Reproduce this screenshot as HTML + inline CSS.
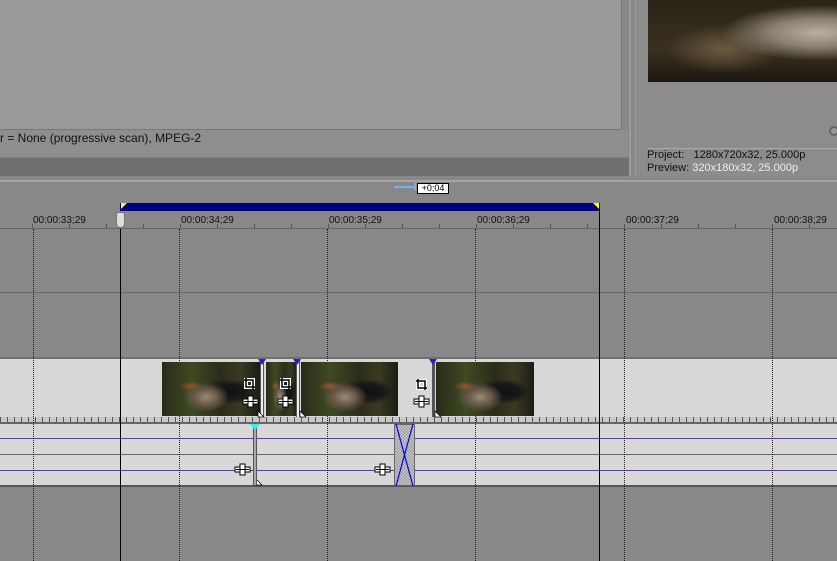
<!DOCTYPE html><html><head><style>
*{margin:0;padding:0;box-sizing:border-box}
body{width:837px;height:561px;overflow:hidden;background:#888;position:relative;font-family:"Liberation Sans",sans-serif;font-size:11px}
div{position:absolute}
.vd{width:0;border-left:1px dotted #222}
.th{top:362px;height:54px;background:radial-gradient(ellipse at 45% 65%,#9a8a7a 0,#6a5a4a 15%,transparent 30%),radial-gradient(ellipse at 30% 45%,#a05030 0,transparent 12%),radial-gradient(ellipse at 68% 55%,#111 0,#181818 18%,transparent 30%),linear-gradient(90deg,#2a2a18,#3d4a22 30%,#2c2c1a 60%,#3a3a22 80%,#1c1c14)}
.tc{font-size:10px;color:#111;top:215px}
svg{position:absolute}
</style></head><body>
<div style="left:0;top:0;width:622px;height:130px;background:#999;border-right:1px solid #777;border-bottom:1px solid #777"></div>
<div style="left:0;top:130px;width:628px;height:27px;background:#8e8e8e"></div>
<div style="left:0;top:131px;color:#111;font-size:12px">r = None (progressive scan), MPEG-2</div>
<div style="left:0;top:157px;width:629px;height:19px;background:#707070;border-top:1px solid #808080"></div>
<div style="left:629px;top:0;width:2px;height:177px;background:#9a9a9a"></div>
<div style="left:635px;top:0;width:202px;height:177px;background:#8c8c8c;border-left:1px solid #9a9a9a"></div>
<div style="left:648px;top:0;width:189px;height:82px;background:radial-gradient(ellipse at 90% 40%,#b8b0a0 0,#8a8070 20%,transparent 40%),radial-gradient(ellipse at 40% 60%,#6a5a40 0,transparent 35%),linear-gradient(#2a2418,#3a3020 60%,#1c1810)"></div>
<div style="left:648px;top:148px;width:189px;height:1px;background:#aaa"></div>
<div style="left:647px;top:149px;color:#111;font-size:11px;line-height:13px">Project:&nbsp;&nbsp; 1280x720x32, 25.000p<br>Preview: <span style="color:#eee">320x180x32, 25.000p</span></div>
<div style="left:829px;top:126px;width:10px;height:10px;border-radius:50%;border:2px solid #666;background:#999"></div>
<div style="left:0;top:180px;width:837px;height:2px;background:#a5a5a5"></div>
<div style="left:394px;top:186px;width:20px;height:2px;background:#7ab0f0"></div>
<div style="left:414px;top:183px;width:2px;height:7px;background:#7ab0f0"></div>
<div style="left:417px;top:183px;width:32px;height:11px;background:#fff;border:1px solid #000;font-size:9px;line-height:9px;text-align:center;color:#000">+0;04</div>
<div style="left:120px;top:203px;width:480px;height:8px;background:#000080"></div>
<div style="left:121px;top:203px;width:0;height:0;border-top:6px solid #ff0;border-right:6px solid transparent"></div>
<div style="left:593px;top:203px;width:0;height:0;border-top:6px solid #ff0;border-left:6px solid transparent"></div>
<div style="left:0;top:228px;width:837px;height:1px;background:#666"></div>
<div style="left:0;top:224px;width:837px;height:4px;background-image:repeating-linear-gradient(90deg,transparent 0 32px,#555 32px 33px,transparent 33px 69px,#555 69px 70px,transparent 70px 106px,#555 106px 107px,transparent 107px 143px,#555 143px 144px,transparent 144px 148px)"></div>
<div class="tc" style="left:33px">00:00:33;29</div>
<div class="tc" style="left:181px">00:00:34;29</div>
<div class="tc" style="left:329px">00:00:35;29</div>
<div class="tc" style="left:477px">00:00:36;29</div>
<div class="tc" style="left:626px">00:00:37;29</div>
<div class="tc" style="left:774px">00:00:38;29</div>
<div style="left:116px;top:212px;width:9px;height:16px;background:#ddd;border:1px solid #777;border-radius:2px 2px 4px 4px"></div>
<div style="left:0;top:292px;width:837px;height:1px;background:#6a6a6a"></div>
<div style="left:0;top:357px;width:837px;height:2px;background:#707070"></div>
<div style="left:0;top:359px;width:837px;height:58px;background:#d8d8d8"></div>
<div style="left:0;top:417px;width:837px;height:5px;background:#c8c8c8;background-image:repeating-linear-gradient(90deg,#555 0 1px,transparent 1px 7px)"></div>
<div style="left:0;top:422px;width:837px;height:2px;background:#666"></div>
<div style="left:0;top:424px;width:837px;height:61px;background:#d8d8d8"></div>
<div style="left:0;top:485px;width:837px;height:2px;background:#555"></div>
<div style="left:0;top:438px;width:837px;height:1px;background:#5a3f99"></div>
<div style="left:0;top:454px;width:837px;height:1px;background:#666"></div>
<div style="left:0;top:470px;width:837px;height:1px;background:#5a3f99"></div>
<div class="vd" style="left:33px;top:229px;height:332px"></div>
<div class="vd" style="left:179px;top:229px;height:332px"></div>
<div class="vd" style="left:327px;top:229px;height:332px"></div>
<div class="vd" style="left:475px;top:229px;height:332px"></div>
<div class="vd" style="left:624px;top:229px;height:332px"></div>
<div class="vd" style="left:772px;top:229px;height:332px"></div>
<div class="th" style="left:162px;width:98px"></div>
<div class="th" style="left:266px;width:31px"></div>
<div class="th" style="left:301px;width:97px"></div>
<div class="th" style="left:436px;width:98px"></div>
<div style="left:260px;top:360px;width:4px;height:57px;background:#eee;border-left:1px solid #555;border-right:1px solid #555"></div>
<div style="left:296px;top:360px;width:4px;height:57px;background:#eee;border-left:1px solid #555;border-right:1px solid #555"></div>
<div style="left:432px;top:360px;width:3px;height:57px;background:#555"></div>
<div style="left:258px;top:359px;border-top:6px solid #22c;border-left:4px solid transparent;border-right:4px solid transparent"></div>
<div style="left:293px;top:359px;border-top:6px solid #22c;border-left:4px solid transparent;border-right:4px solid transparent"></div>
<div style="left:429px;top:359px;border-top:6px solid #22c;border-left:4px solid transparent;border-right:4px solid transparent"></div>
<svg width="837" height="561" style="left:0;top:0">
<defs>
<g id="crop"><path d="M2 0 V9 H11 M0 2 H9 V11" stroke="#fff" stroke-width="4" fill="none"/><path d="M2 0 V9 H11 M0 2 H9 V11" stroke="#000" stroke-width="1.5" fill="none"/></g>
<g id="sl"><rect x="0" y="2" width="15" height="5" fill="#fff" stroke="#000" stroke-width="1"/><rect x="5" y="-1" width="5" height="11" fill="#fff" stroke="#000" stroke-width="1"/><path d="M1 4.5 H14" stroke="#000"/></g>
</defs>
<use href="#crop" x="244" y="378"/><use href="#crop" x="280" y="378"/><use href="#crop" x="416" y="379"/>
<use href="#sl" x="243" y="397"/><use href="#sl" x="278" y="397"/><use href="#sl" x="414" y="397"/>
<use href="#sl" x="235" y="465"/><use href="#sl" x="375" y="465"/>
<path d="M258 417 V411 L264 417Z M300 417 V411 L306 417Z M435 417 V411 L441 417Z M256 485 V479 L262 485Z M396 485 V479 L402 485Z" fill="#fff" stroke="#000" stroke-width="0.7"/>
</svg>
<div style="left:253px;top:425px;width:4px;height:60px;background:#aaa;border-left:1px solid #555;border-right:1px solid #555"></div>
<div style="left:250px;top:424px;border-top:6px solid #3ee;border-left:5px solid transparent;border-right:5px solid transparent"></div>
<div style="left:394px;top:424px;width:21px;height:62px;background:repeating-conic-gradient(#999 0 25%,#ccc 0 50%) 0 0/3px 3px;border:1px solid #666"></div>
<svg style="left:394px;top:424px" width="21" height="62"><path d="M2 0 L19 62 M19 0 L2 62" stroke="#00f" stroke-width="1.2" fill="none"/></svg>
<div style="left:120px;top:229px;width:1px;height:332px;background:#000"></div>
<div style="left:599px;top:211px;width:1px;height:350px;background:#000"></div>
</body></html>
